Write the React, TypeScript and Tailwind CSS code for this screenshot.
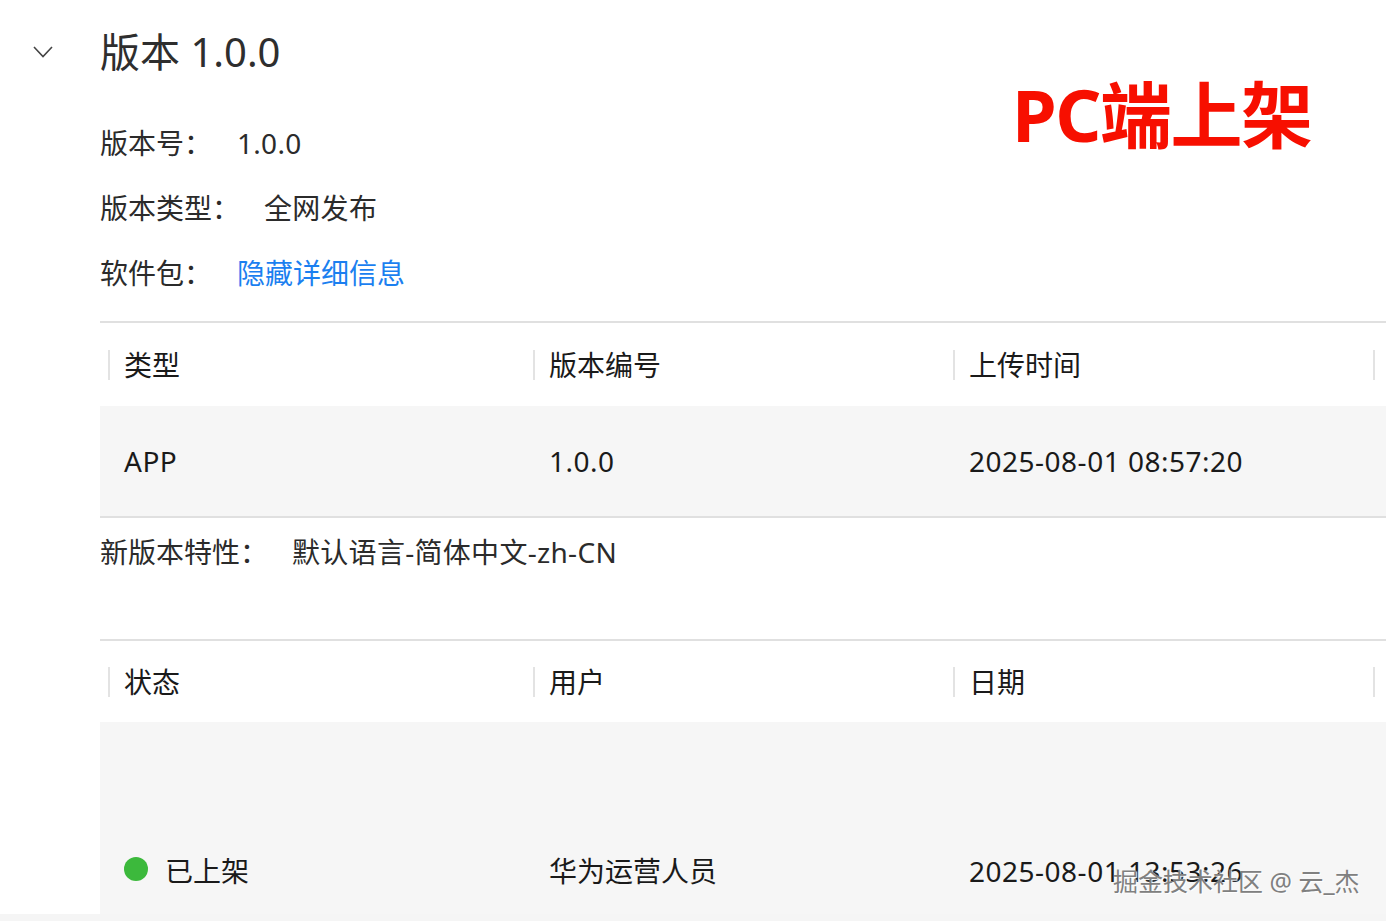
import React from 'react';

const font = { fontFamily: '"Noto Sans", "Noto Sans CJK SC", sans-serif' };

const HeaderCell: React.FC<{ label: string; w: string }> = ({ label, w }) => (
  <div className={`${w} flex-shrink-0 flex items-center pl-2`}>
    <span className="w-[2px] h-[30px] bg-[#e3e3e3]" />
    <span className="ml-[14px]">{label}</span>
  </div>
);

const InfoRow: React.FC<{ label: string; value: string; gap: string; link?: boolean }> = ({ label, value, gap, link }) => (
  <div className="flex items-center h-[65px]">
    <span className={gap}>{label}</span>
    <span className={link ? 'text-[#1b7ff0]' : 'text-[#2b2b2b] tracking-[0.3px]'}>{value}</span>
  </div>
);

const App: React.FC = () => {
  return (
    <div className="w-[1386px] h-[921px] overflow-hidden bg-[#f5f5f5] relative" style={font}>
      <div className="h-[914px] bg-white overflow-hidden">
        {/* 标题 */}
        <div className="flex items-center pt-6 h-[80px]">
          <div className="w-[100px] flex items-center pl-[33px]">
            <svg width="20" height="12" viewBox="0 0 20 12" fill="none">
              <path d="M1 1L10 10.5L19 1" stroke="#444" strokeWidth="1.6" />
            </svg>
          </div>
          <h1 className="text-[40px] leading-[56px] text-[#2e2e2e]">版本 1.0.0</h1>
        </div>

        {/* 基本信息 */}
        <div className="pl-[100px] mt-[30px] text-[28px] text-[#2b2b2b]">
          <InfoRow label="版本号：" value="1.0.0" gap="w-[137px]" />
          <InfoRow label="版本类型：" value="全网发布" gap="w-[164px]" />
          <InfoRow label="软件包：" value="隐藏详细信息" gap="w-[137px]" link />
        </div>

        {/* 软件包表格 */}
        <div className="ml-[100px] mt-[16px] border-t-2 border-[#e0e0e0] text-[28px] text-[#1a1a1a]">
          <div className="flex h-[83px]">
            <HeaderCell label="类型" w="w-[425px]" />
            <HeaderCell label="版本编号" w="w-[420px]" />
            <HeaderCell label="上传时间" w="w-[420px]" />
            <HeaderCell label="" w="w-[100px]" />
          </div>
          <div className="flex items-center h-[112px] bg-[#f6f6f6] border-b-2 border-[#e0e0e0] tracking-[0.5px]">
            <div className="w-[425px] pl-6">APP</div>
            <div className="w-[420px] pl-6">1.0.0</div>
            <div className="w-[420px] pl-6">2025-08-01 08:57:20</div>
          </div>
        </div>

        <div className="pl-[100px] pt-[14px] h-[121px] text-[28px] leading-[40px] text-[#2b2b2b] flex">
          <span className="w-[192px]">新版本特性：</span>
          <span className="tracking-[0.3px]">默认语言-简体中文-zh-CN</span>
        </div>

        {/* 状态表格 */}
        <div className="ml-[100px] border-t-2 border-[#e0e0e0] text-[28px] text-[#1a1a1a]">
          <div className="flex h-[81px]">
            <HeaderCell label="状态" w="w-[425px]" />
            <HeaderCell label="用户" w="w-[420px]" />
            <HeaderCell label="日期" w="w-[420px]" />
            <HeaderCell label="" w="w-[100px]" />
          </div>
          <div className="flex items-center h-[298px] bg-[#f6f6f6]">
            <div className="w-[425px] pl-6 flex items-center">
              <span className="w-[24px] h-[24px] rounded-full bg-[#3cb93c] mr-[17px] -mt-1" />
              <span>已上架</span>
            </div>
            <div className="w-[420px] pl-6">华为运营人员</div>
            <div className="w-[420px] pl-6 tracking-[0.5px]">2025-08-01 13:53:26</div>
          </div>
        </div>
      </div>

      {/* 标注 */}
      <div className="absolute left-[1012px] top-[71px] text-[72px] leading-[86px] font-bold text-[#f70f00] tracking-[-1.5px]">
        PC端上架
      </div>

      {/* 水印 */}
      <div className="absolute left-[1113px] top-[864px] text-[25px] leading-[34px] text-[#808080] [text-shadow:1px_1px_1px_#ffffff]">
        掘金技术社区 @ 云_杰
      </div>
    </div>
  );
};

export default App;
